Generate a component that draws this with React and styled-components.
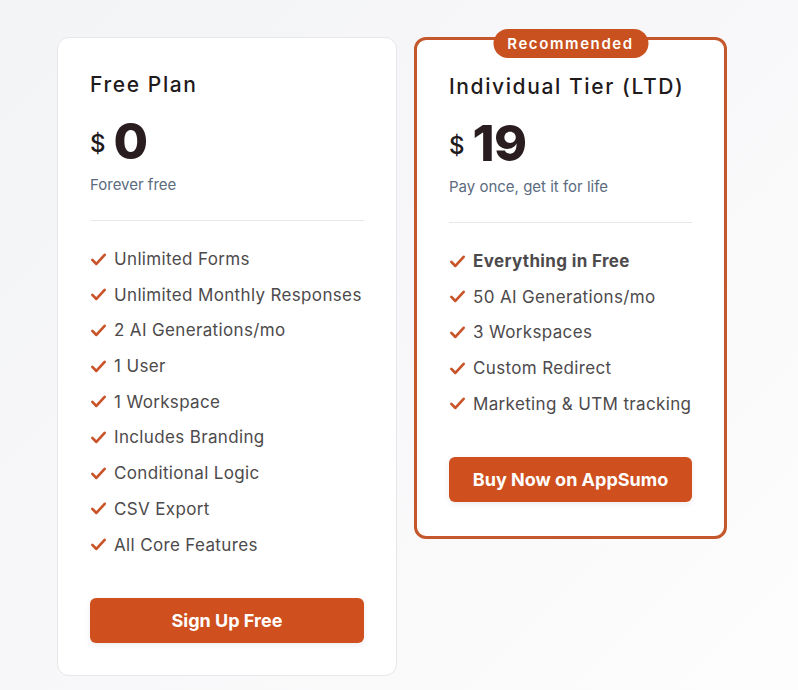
import styled, { createGlobalStyle } from "styled-components";

const GlobalStyle = createGlobalStyle`
    body {
        margin: 0;
        font-family: Inter, "Noto Sans", sans-serif;
        background: linear-gradient(135deg, #f3f4f6 0%, #f7f7f9 45%, #fdfdfd 100%);
        min-height: 690px;
    }
`

const plans = [
    {
        name: "Free Plan",
        price: "0",
        note: "Forever free",
        features: [
            "Unlimited Forms",
            "Unlimited Monthly Responses",
            "2 AI Generations/mo",
            "1 User",
            "1 Workspace",
            "Includes Branding",
            "Conditional Logic",
            "CSV Export",
            "All Core Features",
        ],
        cta: "Sign Up Free",
    },
    {
        name: "Individual Tier (LTD)",
        price: "19",
        note: "Pay once, get it for life",
        features: [
            { text: "Everything in Free", bold: true },
            "50 AI Generations/mo",
            "3 Workspaces",
            "Custom Redirect",
            "Marketing & UTM tracking",
        ],
        cta: "Buy Now on AppSumo",
        recommended: true,
    },
]

function Check() {
    return (
        <CheckIcon viewBox="0 0 16 16" fill="none">
            <path d="M2.2 8.4 L6 12.2 L13.8 3.6" stroke="#c9542a" strokeWidth="2.5" strokeLinecap="round" strokeLinejoin="round" />
        </CheckIcon>
    )
}

function PlanCard({ plan }) {
    return (
        <Card $recommended={plan.recommended}>
            {plan.recommended && <Badge>Recommended</Badge>}
            <Title>{plan.name}</Title>
            <PriceRow>
                <Currency>$</Currency>
                <Amount>{plan.price}</Amount>
            </PriceRow>
            <Note>{plan.note}</Note>
            <Divider />
            <Features>
                {plan.features.map((f, i) => {
                    const item = typeof f === "string" ? { text: f } : f
                    return (
                        <Feature key={i} $bold={item.bold}>
                            <Check />
                            <span>{item.text}</span>
                        </Feature>
                    )
                })}
            </Features>
            <Button>{plan.cta}</Button>
        </Card>
    )
}

export default function App() {
    return (
        <>
            <GlobalStyle />
            <Page>
                {plans.map((p, i) => <PlanCard key={i} plan={p} />)}
            </Page>
        </>
    )
}

const Page = styled.div`
    display: flex;
    align-items: flex-start;
    gap: 17px;
    padding: 37px 0 0 57px;
`
const Card = styled.div`
    position: relative;
    box-sizing: border-box;
    display: flex;
    flex-direction: column;
    width: ${p => p.$recommended ? "313px" : "340px"};
    padding: ${p => p.$recommended ? "33px 32px 34px" : "33px 32px 32px"};
    background: #ffffff;
    border: ${p => p.$recommended ? "3px solid #c4582c" : "1px solid #e6e7ea"};
    border-radius: 12px;
`
const Badge = styled.div`
    position: absolute;
    top: -11px;
    left: 50%;
    transform: translateX(-50%);
    height: 29px;
    width: 155px;
    display: flex;
    align-items: center;
    justify-content: center;
    background: #c9511f;
    color: #ffffff;
    font-size: 15px;
    font-weight: 600;
    letter-spacing: 1.6px;
    border-radius: 15px;
`
const Title = styled.h3`
    margin: 0;
    font-size: 21px;
    line-height: 28px;
    font-weight: 500;
    color: #1f1a1c;
    letter-spacing: 1.6px;
`
const PriceRow = styled.div`
    display: flex;
    align-items: center;
    gap: 8px;
    margin-top: 14px;
    height: 56px;
`
const Currency = styled.span`
    font-size: 24px;
    font-weight: 500;
    color: #1f1a1c;
    margin-top: 4px;
`
const Amount = styled.span`
    font-size: 50px;
    font-weight: 800;
    color: #2a1d20;
    letter-spacing: -0.5px;
`
const Note = styled.p`
    margin: 6px 0 0;
    font-size: 15px;
    line-height: 20px;
    color: #5b6b80;
`
const Divider = styled.hr`
    margin: 25px 0 0;
    border: none;
    border-top: 1px solid #e8e8ea;
`
const Features = styled.ul`
    list-style: none;
    margin: 26px 0 0;
    padding: 0;
    display: flex;
    flex-direction: column;
    gap: 11.7px;
`
const Feature = styled.li`
    display: flex;
    align-items: center;
    gap: 7px;
    font-size: 17px;
    line-height: 24px;
    letter-spacing: 0.35px;
    white-space: nowrap;
    color: #4d4a4c;
    font-weight: ${p => p.$bold ? 700 : 400};
`
const CheckIcon = styled.svg`
    width: 17px;
    height: 17px;
    flex-shrink: 0;
`
const Button = styled.button`
    margin-top: 41px;
    height: 45px;
    border: none;
    border-radius: 6px;
    background: #cf4f1e;
    color: #ffffff;
    font-family: Inter, sans-serif;
    font-size: 18px;
    font-weight: 700;
    box-shadow: 0 2px 6px rgba(0, 0, 0, 0.08);
    cursor: pointer;
`
